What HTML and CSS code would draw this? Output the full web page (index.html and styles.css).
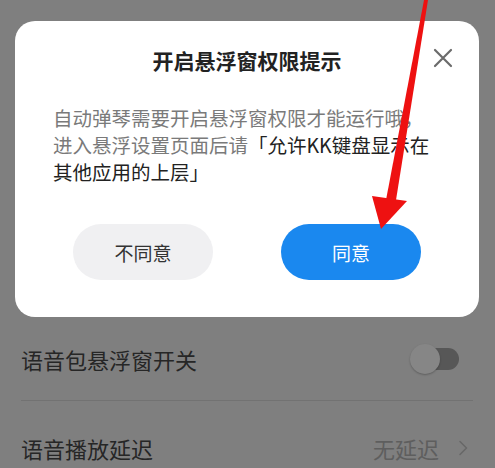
FILE: index.html
```html
<!DOCTYPE html>
<html lang="zh">
<head>
<meta charset="utf-8">
<link rel="stylesheet" href="styles.css">
</head>
<body>
<div class="screen">
  <div class="dialog">
    <div class="dialog-head">
      <div class="title">开启悬浮窗权限提示</div>
      <svg class="close" viewBox="0 0 20 20" width="20" height="20"><path d="M2 2 L18 18 M18 2 L2 18" stroke="#6b6b6b" stroke-width="2.2" stroke-linecap="round" fill="none"/></svg>
    </div>
    <div class="msg">自动弹琴需要开启悬浮窗权限才能运行哦，<br>进入悬浮设置页面后请<span class="em">「允许KK键盘显示在<br>其他应用的上层」</span></div>
    <div class="actions">
      <div class="btn btn-no">不同意</div>
      <div class="btn btn-yes">同意</div>
    </div>
  </div>
  <div class="list">
    <div class="row row-first">
      <span class="label">语音包悬浮窗开关</span>
      <span class="toggle"><span class="knob"></span></span>
    </div>
    <div class="row row-second">
      <span class="label">语音播放延迟</span>
      <span class="value">无延迟<svg class="chev" viewBox="0 0 10 16" width="10" height="16"><path d="M2 1.5 L8.5 8 L2 14.5" stroke="#686868" stroke-width="1.6" fill="none" stroke-linecap="round" stroke-linejoin="round"/></svg></span>
    </div>
  </div>
  <svg class="arrow" viewBox="0 0 495 468" width="495" height="468">
    <polygon points="424,0 428,0 396,200 386,200" fill="#ee1111"/>
    <polygon points="372,196 407,201 381,229" fill="#ee1111"/>
  </svg>
</div>
</body>
</html>
```
FILE: styles.css
```css
* { box-sizing: border-box; }
html, body {
  margin: 0;
  padding: 0;
  background: #7f7f7f;
}
body {
  font-family: "Noto Sans CJK SC", "Noto Sans", sans-serif;
}
.screen {
  position: relative;
  width: 495px;
  height: 468px;
  overflow: hidden;
  padding-top: 21px;
}
.dialog {
  margin-left: 15px;
  width: 464px;
  height: 296px;
  background: #ffffff;
  border-radius: 20px;
  padding: 24px 0 0 0;
}
.dialog-head {
  position: relative;
  height: 30px;
  display: flex;
  justify-content: center;
  align-items: center;
}
.title {
  font-size: 21px;
  font-weight: 700;
  color: #222;
  line-height: 30px;
}
.close {
  position: absolute;
  left: 418px;
  top: 3px;
}
.msg {
  margin-top: 29px;
  padding-left: 38px;
  font-size: 19.5px;
  line-height: 27px;
  color: #7a7a7a;
  white-space: nowrap;
}
.msg .em { color: #222; }
.actions {
  margin-top: 39px;
  display: flex;
  justify-content: center;
  gap: 68px;
}
.btn {
  width: 140px;
  height: 56px;
  border-radius: 28px;
  display: flex;
  align-items: center;
  justify-content: center;
  font-size: 19px;
}
.btn-no { background: #f0f0f2; color: #333; }
.btn-yes { background: #1a88ef; color: #fff; }
.list {
  padding: 0 22px 0 21px;
}
.row {
  display: flex;
  align-items: center;
  justify-content: space-between;
}
.row-first {
  height: 84px;
  border-bottom: 1px solid #727272;
}
.row-second {
  height: 94px;
}
.label {
  font-size: 22px;
  color: #262626;
}
.toggle {
  position: relative;
  width: 48px;
  height: 22px;
  margin-right: 14px;
  background: #575757;
  border-radius: 11px;
}
.knob {
  position: absolute;
  left: -1px;
  top: -4px;
  width: 30px;
  height: 30px;
  border-radius: 50%;
  background: #868686;
  box-shadow: 0 1px 2px rgba(0,0,0,0.25);
}
.value {
  display: flex;
  align-items: center;
  gap: 19px;
  font-size: 22px;
  color: #5e5e5e;
  margin-right: 5px;
}
.arrow {
  position: absolute;
  left: 0;
  top: 0;
  pointer-events: none;
}
```
